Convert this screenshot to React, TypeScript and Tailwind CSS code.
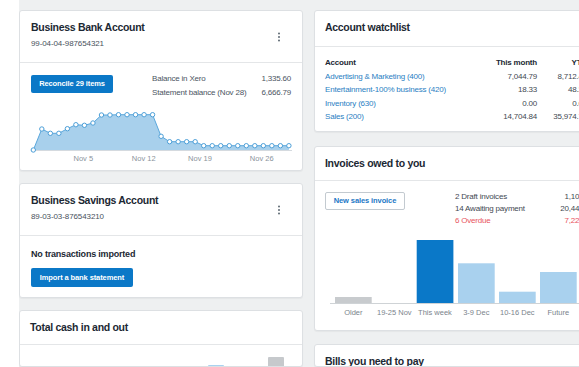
import React from "react";

const balanceYs = [
	150, 129, 133.3, 133.3, 128.7, 124.7, 125.3, 123, 115, 115, 114.7, 114.7,
	114.7, 114.7, 114.7, 136.3, 141.7, 141.7, 141.7, 141.7, 145.7, 145.7, 145.7,
	145.7, 145.7, 145.7, 145.7, 145.7, 145.7, 145.7, 145.7,
];

const watchlist = [
	{ name: "Advertising & Marketing (400)", month: "7,044.79", ytd: "8,712.43" },
	{ name: "Entertainment-100% business (420)", month: "18.33", ytd: "48.26" },
	{ name: "Inventory (630)", month: "0.00", ytd: "0.00" },
	{ name: "Sales (200)", month: "14,704.84", ytd: "35,974.71" },
];

const invoiceBars = [
	{ label: "Older", x: 20, top: 72, color: "#c8cbce" },
	{ label: "19-25 Nov", x: 61, top: 78, color: "#a9d1ee" },
	{ label: "This week", x: 101.7, top: 15, color: "#0a78c8" },
	{ label: "3-9 Dec", x: 143, top: 38.3, color: "#a9d1ee" },
	{ label: "10-16 Dec", x: 184, top: 66.7, color: "#a9d1ee" },
	{ label: "Future", x: 225, top: 47, color: "#a9d1ee" },
];

const Dots = () => (
	<svg width="4" height="10" viewBox="0 0 4 10" className="shrink-0">
		<circle cx="2" cy="1.5" r="1" fill="#5f6a74" />
		<circle cx="2" cy="5" r="1" fill="#5f6a74" />
		<circle cx="2" cy="8.5" r="1" fill="#5f6a74" />
	</svg>
);

const Card = ({
	className,
	children,
}: {
	className: string;
	children: React.ReactNode;
}) => (
	<div
		className={
			"shrink-0 flex flex-col overflow-hidden rounded-[3px] border border-[#dde0e3] bg-white shadow-[0_1px_1px_rgba(0,0,0,0.04)] " +
			className
		}
	>
		{children}
	</div>
);

const SimpleHeader = ({ title }: { title: string }) => (
	<div className="h-[34px] shrink-0 border-b border-[#e4e6e8] pl-[10px] pt-[9px]">
		<div className="text-[10.5px] font-bold leading-[14px] tracking-[-0.3px] text-[#1c2833]">
			{title}
		</div>
	</div>
);

const AccountHeader = ({ title, number }: { title: string; number: string }) => (
	<div className="flex h-[52px] shrink-0 items-center justify-between border-b border-[#e4e6e8] pl-[11px] pr-[21px]">
		<div className="self-start pt-[9px]">
			<div className="text-[10.5px] font-bold leading-[14px] tracking-[-0.3px] text-[#1c2833]">
				{title}
			</div>
			<div className="mt-[4px] text-[8px] leading-[12px] tracking-[-0.1px] text-[#48525c]">
				{number}
			</div>
		</div>
		<Dots />
	</div>
);

const BalanceChart = () => {
	const pts = balanceYs.map((y, i) => [13.3 + i * 8.52, y - 105]);
	const line = pts.map(([x, y]) => `${x},${y}`).join(" ");
	const area = `13.3,45.5 ${line} ${pts[pts.length - 1][0]},45.5`;
	return (
		<svg width="282" height="65" className="block shrink-0">
			<polygon points={area} fill="#a8d0ec" />
			<line x1="11" y1="45.5" x2="272" y2="45.5" stroke="#d5dadf" strokeWidth="1" />
			<polyline points={line} fill="none" stroke="#5aa7dc" strokeWidth="1" />
			{pts.map(([x, y], i) => (
				<circle key={i} cx={x} cy={y} r="2.2" fill="white" stroke="#4c9fd8" strokeWidth="1" />
			))}
			{[
				["Nov 5", 63.3],
				["Nov 12", 123.7],
				["Nov 19", 180],
				["Nov 26", 241.7],
			].map(([t, x]) => (
				<text
					key={t as string}
					x={x as number}
					y="55.5"
					textAnchor="middle"
					fontSize="7.5"
					fill="#8a939b"
					fontFamily="'Liberation Sans', Arial, sans-serif"
				>
					{t}
				</text>
			))}
		</svg>
	);
};

export default function App() {
	return (
		<div className="h-[367px] w-[579px] overflow-hidden bg-white font-['Liberation_Sans',Arial,sans-serif]">
			<div className="ml-[19px] flex h-full gap-[11px] overflow-hidden bg-[#eef0f1] pt-[10px]">
				{/* left column */}
				<div className="flex w-[284px] shrink-0 flex-col gap-[12px]">
					<Card className="h-[161px]">
						<AccountHeader title="Business Bank Account" number="99-04-04-987654321" />
						<div className="flex h-[42px] shrink-0 items-start px-[11px]">
							<button className="mt-[12px] h-[18px] w-[82px] rounded-[2px] bg-[#0b78c7] text-[7.5px] font-bold tracking-[-0.1px] text-white">
								Reconcile 29 items
							</button>
							<div className="ml-auto mt-[9px] w-[139px] text-[8px] leading-[13.5px] tracking-[-0.2px] text-[#4b555f]">
								<div className="flex justify-between">
									<span>Balance in Xero</span>
									<span>1,335.60</span>
								</div>
								<div className="flex justify-between">
									<span>Statement balance (Nov 28)</span>
									<span>6,666.79</span>
								</div>
							</div>
						</div>
						<BalanceChart />
					</Card>

					<Card className="h-[115px]">
						<AccountHeader title="Business Savings Account" number="89-03-03-876543210" />
						<div className="px-[11px] pt-[12px]">
							<div className="text-[9px] font-bold leading-[12px] tracking-[-0.2px] text-[#1c2833]">
								No transactions imported
							</div>
							<button className="mt-[8px] h-[19px] w-[102px] rounded-[2px] bg-[#0b78c7] text-[7.5px] font-bold tracking-[-0.1px] text-white">
								Import a bank statement
							</button>
						</div>
					</Card>

					<Card className="flex-1">
						<SimpleHeader title="Total cash in and out" />
						<svg width="282" height="40" className="block shrink-0">
							<rect x="188" y="20" width="16" height="40" rx="1" fill="#a9d2f0" />
							<rect x="248" y="12" width="16" height="50" rx="1" fill="#c6c9cc" />
						</svg>
					</Card>
				</div>

				{/* right column */}
				<div className="flex w-[284px] shrink-0 flex-col">
					<Card className="h-[122px]">
						<div className="h-[36px] shrink-0 border-b border-[#e4e6e8] pl-[10px] pt-[9px]">
							<div className="text-[10.5px] font-bold leading-[14px] tracking-[-0.3px] text-[#1c2833]">
								Account watchlist
							</div>
						</div>
						<div className="grid grid-cols-[152px_60px_50px] pl-[10px] pt-[9px] text-[8px] leading-[13.5px] tracking-[-0.2px]">
							<div className="font-bold text-[#1c2833]">Account</div>
							<div className="text-right font-bold text-[#1c2833]">This month</div>
							<div className="text-right font-bold text-[#1c2833]">YTD</div>
							{watchlist.map((r) => (
								<React.Fragment key={r.name}>
									<div className="whitespace-nowrap text-[#2b80c3]">{r.name}</div>
									<div className="text-right text-[#3f4952]">{r.month}</div>
									<div className="text-right text-[#3f4952]">{r.ytd}</div>
								</React.Fragment>
							))}
						</div>
					</Card>

					<Card className="mt-[14px] h-[185px]">
						<SimpleHeader title="Invoices owed to you" />
						<div className="flex h-[44px] shrink-0 items-start pl-[10px]">
							<button className="mt-[11px] h-[18px] w-[80px] rounded-[2px] border border-[#c3cad0] bg-white text-[7.5px] font-bold tracking-[-0.1px] text-[#1b77c5]">
								New sales invoice
							</button>
							<div className="ml-[50px] mt-[10px] w-[139px] text-[8px] leading-[12px] tracking-[-0.2px] text-[#3f4952]">
								<div className="flex justify-between">
									<span>2 Draft invoices</span>
									<span>1,100.00</span>
								</div>
								<div className="flex justify-between">
									<span>14 Awaiting payment</span>
									<span>20,449.89</span>
								</div>
								<div className="flex justify-between text-[#e8545e]">
									<span>6 Overdue</span>
									<span>7,221.80</span>
								</div>
							</div>
						</div>
						<svg width="282" height="105" className="block shrink-0">
							{invoiceBars.map((b) => (
								<rect
									key={b.label}
									x={b.x}
									y={b.top}
									width="36.7"
									height={78 - b.top}
									fill={b.color}
								/>
							))}
							<line x1="15" y1="78.5" x2="282" y2="78.5" stroke="#cfd3d6" strokeWidth="1" />
							{invoiceBars.map((b) => (
								<text
									key={b.label}
									x={b.x + 18.3}
									y="89.5"
									textAnchor="middle"
									fontSize="7.5"
									fill="#7b848c"
									fontFamily="'Liberation Sans', Arial, sans-serif"
								>
									{b.label}
								</text>
							))}
						</svg>
					</Card>

					<Card className="mt-[13px] flex-1">
						<SimpleHeader title="Bills you need to pay" />
					</Card>
				</div>
			</div>
		</div>
	);
}
